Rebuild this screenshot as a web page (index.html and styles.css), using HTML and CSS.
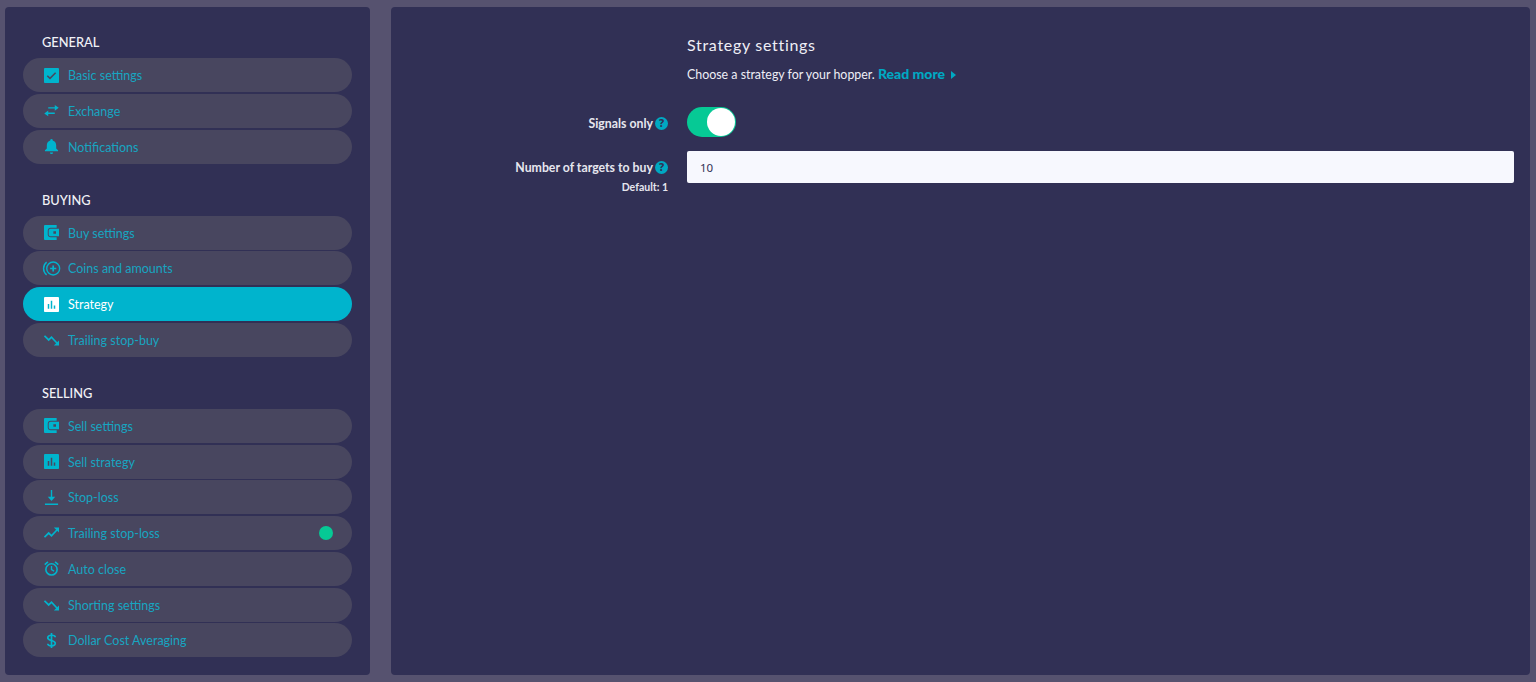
FILE: index.html
```html
<!DOCTYPE html>
<html lang="en">
<head>
<meta charset="utf-8">
<title>Strategy settings</title>
<link rel="stylesheet" href="styles.css">
</head>
<body>
<svg class="defs" width="0" height="0" aria-hidden="true">
  <symbol id="i-check" viewBox="0 0 16 16"><path fill="currentColor" fill-rule="evenodd" d="M1.200 0h13.600C15.500 0 16 .500 16 1.200v13.600c0 .700-.500 1.200-1.200 1.200H1.200C.500 16 0 15.500 0 14.800V1.200C0 .500.500 0 1.200 0zM6.400 12.300l6.600-6.600-1.200-1.200-5.400 5.400-2.300-2.300-1.200 1.200z"/></symbol>
  <symbol id="i-swap" viewBox="0 0 16 16"><path fill="currentColor" d="M4.500 4.400h7V2l4.200 3.100-4.200 3.100V5.800h-7zM11.500 10.200h-7V8L.3 11.100l4.200 3.100v-2.400h7z"/></symbol>
  <symbol id="i-bell" viewBox="0 0 16 16"><path fill="currentColor" d="M8 0a1.300 1.300 0 0 1 1.300 1.300v.4c2.400.6 3.700 2.700 3.700 5.100v3.400l2 1.700v1.100H1v-1.100l2-1.700V6.800c0-2.400 1.300-4.500 3.700-5.100v-.4A1.300 1.300 0 0 1 8 0zM6.300 14.400h3.400a1.700 1.600 0 0 1-3.400 0z"/></symbol>
  <symbol id="i-wallet" viewBox="0 0 16 16"><path fill="currentColor" fill-rule="evenodd" d="M1 0h12.500v3H7C5.300 3 4 4.300 4 6v4c0 1.700 1.300 3 3 3h6.500v3H1c-.600 0-1-.400-1-1V1c0-.600.400-1 1-1zM7 4h9v8H7c-1.100 0-2-.900-2-2V6c0-1.100.900-2 2-2zM10 6.600v2.800h2.800V6.600z"/></symbol>
  <symbol id="i-coins" viewBox="0 0 20 16"><g fill="none" stroke="currentColor" stroke-width="1.500"><circle cx="11.800" cy="8" r="6.900"/><path d="M4.800 1.200a8.700 8.700 0 0 0 0 13.600"/><path stroke-width="1.800" d="M8.500 8h6.600M11.800 4.700v6.600"/></g></symbol>
  <symbol id="i-chart" viewBox="0 0 16 16"><path fill="currentColor" fill-rule="evenodd" d="M1.200 0h13.600c.700 0 1.200.500 1.200 1.200v13.600c0 .700-.500 1.200-1.200 1.200H1.200C.500 16 0 15.500 0 14.800V1.200C0 .500.500 0 1.200 0zM4 7.500v5h1.600v-5zM7.200 4v8.500h1.600V4zM10.400 9v3.500H12V9z"/></symbol>
  <symbol id="i-down" viewBox="0 0 16 14"><path fill="none" stroke="currentColor" stroke-width="1.800" d="M.5 3l4.500 4.500 3-3L14 11"/><path fill="currentColor" d="M16.500 13.500H10.500L16.500 7.500z"/></symbol>
  <symbol id="i-up" viewBox="0 0 16 14"><path fill="none" stroke="currentColor" stroke-width="1.800" d="M.5 11l4.500-4.500 3 3L14 3"/><path fill="currentColor" d="M16.500.5H10.500L16.500 6.500z"/></symbol>
  <symbol id="i-stop" viewBox="0 0 14 16"><path fill="none" stroke="currentColor" stroke-width="1.500" d="M0 15.200h14M7 0v9"/><path fill="currentColor" d="M3 7.300h8L7 11.800z"/></symbol>
  <symbol id="i-alarm" viewBox="0 0 16 16"><g fill="none" stroke="currentColor"><circle cx="8" cy="9" r="6" stroke-width="1.700"/><path stroke-width="1.400" d="M8 5.200V9.200l2.800 1.600"/><path stroke-width="1.800" d="M.8 3.800 4.200 1M15.200 3.800 11.800 1"/></g></symbol>
  <symbol id="i-dollar" viewBox="0 0 10 16"><g fill="none" stroke="currentColor" stroke-width="1.800"><path d="M9 4.500C9 3 7.300 2.400 5 2.400S1 3.300 1 5s1.800 2.400 4 3 4 1.200 4 3-1.800 2.700-4 2.700-4-.8-4-2.200"/><path d="M5 0v16"/></g></symbol>
</svg>
<div class="page">
  <aside class="sidebar">
    <section class="group">
      <h2 class="group-title">GENERAL</h2>
      <a class="item"><svg class="ico"><use href="#i-check"/></svg><span>Basic settings</span></a>
      <a class="item"><svg class="ico"><use href="#i-swap"/></svg><span>Exchange</span></a>
      <a class="item"><svg class="ico"><use href="#i-bell"/></svg><span>Notifications</span></a>
    </section>
    <section class="group">
      <h2 class="group-title">BUYING</h2>
      <a class="item"><svg class="ico"><use href="#i-wallet"/></svg><span>Buy settings</span></a>
      <a class="item"><svg class="ico ico-wide"><use href="#i-coins"/></svg><span>Coins and amounts</span></a>
      <a class="item active"><svg class="ico"><use href="#i-chart"/></svg><span>Strategy</span></a>
      <a class="item"><svg class="ico"><use href="#i-down"/></svg><span>Trailing stop-buy</span></a>
    </section>
    <section class="group">
      <h2 class="group-title">SELLING</h2>
      <a class="item"><svg class="ico"><use href="#i-wallet"/></svg><span>Sell settings</span></a>
      <a class="item"><svg class="ico"><use href="#i-chart"/></svg><span>Sell strategy</span></a>
      <a class="item"><svg class="ico"><use href="#i-stop"/></svg><span>Stop-loss</span></a>
      <a class="item"><svg class="ico"><use href="#i-up"/></svg><span>Trailing stop-loss</span><i class="dot"></i></a>
      <a class="item"><svg class="ico"><use href="#i-alarm"/></svg><span>Auto close</span></a>
      <a class="item"><svg class="ico"><use href="#i-down"/></svg><span>Shorting settings</span></a>
      <a class="item"><svg class="ico"><use href="#i-dollar"/></svg><span>Dollar Cost Averaging</span></a>
    </section>
  </aside>
  <main class="content">
    <div class="form">
      <div class="row row-head">
        <div class="label-col"></div>
        <div class="field-col">
          <h1 class="title">Strategy settings</h1>
          <p class="intro">Choose a strategy for your hopper. <a class="more">Read more<svg class="caret" viewBox="0 0 5 8"><path d="M0 0l5 4-5 4z" fill="currentColor"/></svg></a></p>
        </div>
      </div>
      <div class="row row-toggle">
        <div class="label-col"><label class="label">Signals only<span class="help">?</span></label></div>
        <div class="field-col"><span class="toggle"><i class="knob"></i></span></div>
      </div>
      <div class="row row-input">
        <div class="label-col">
          <label class="label">Number of targets to buy<span class="help">?</span></label>
          <small class="hint">Default: 1</small>
        </div>
        <div class="field-col"><input class="input" type="text" value="10"></div>
      </div>
    </div>
  </main>
</div>
</body>
</html>
```

FILE: styles.css
```css
* { box-sizing: border-box; }
html, body { height: 100%; }
body {
  margin: 0;
  background: #56526f;
  font-family: Lato, "Noto Sans", sans-serif;
  overflow: hidden;
}
.defs { position: absolute; }
.page {
  display: flex;
  gap: 21px;
  height: 682px;
  padding: 7px 6px 7px 5px;
}
.sidebar {
  flex: 0 0 365px;
  background: #313055;
  border-radius: 4px;
  padding: 25px 18px 0;
}
.group { margin-bottom: 26px; }
.group-title {
  margin: 0 0 6px 19px;
  height: 20px;
  font: 500 12.800px/20px Lato, sans-serif;
  color: #f2f2f7;
}
.item {
  display: flex;
  align-items: center;
  height: 34px;
  margin-bottom: 1.750px;
  padding: 0 19px 0 21px;
  border-radius: 17px;
  background: #48465f;
  color: #17a5c1;
  font-size: 12.500px;
  line-height: 30px;
}
.item span { margin: 2px 0 0 9px; }
.ico {
  flex: none;
  width: 15px;
  height: 15px;
  color: #00b4cd;
}
.ico-wide { width: 19px; margin-left: -2px; margin-right: -2px; }
.active { background: #00b4cd; color: #fff; }
.active .ico { color: #fff; }
.dot {
  margin-left: auto;
  width: 14px;
  height: 14px;
  border-radius: 50%;
  background: #06c995;
}
.content {
  flex: 1;
  background: #313055;
  border-radius: 4px;
  padding: 0 16px 0 0;
}
.form { display: flex; flex-direction: column; }
.row { display: flex; }
.label-col {
  flex: 0 0 277px;
  text-align: right;
}
.field-col { flex: 1; margin-left: 19px; }
.row-head { padding-top: 28px; height: 100px; }
.title {
  margin: 0;
  font: 400 16px/20px Lato, sans-serif;
  letter-spacing: .7px;
  color: #eeeef5;
}
.intro {
  margin: 10px 0 0;
  font-size: 12.400px;
  line-height: 18px;
  color: #eeeef5;
}
.more {
  font: 900 14px/18px Lato, sans-serif;
  color: #00a8c2;
}
.caret { width: 5px; height: 8px; margin-left: 6px; color: #00a8c2; }
.row-toggle { height: 44px; }
.row-toggle .label-col { padding-top: 5px; }
.label {
  display: inline-flex;
  align-items: center;
  justify-content: flex-end;
  font-size: 12.300px;
  font-weight: 700;
  line-height: 20px;
  color: #e6e6ee;
}
.help {
  display: inline-block;
  width: 13px;
  height: 13px;
  margin: -2px 0 0 2px;
  border-radius: 50%;
  background: #00a8c2;
  color: #313055;
  font: 800 10.500px/13px "Noto Sans", sans-serif;
  text-align: center;
}
.toggle {
  display: block;
  position: relative;
  width: 49px;
  height: 30px;
  border-radius: 15px;
  background: #06c995;
}
.knob {
  position: absolute;
  right: 1px;
  top: 1px;
  width: 28px;
  height: 28px;
  border-radius: 50%;
  background: #fff;
}
.row-input { height: 48px; }
.row-input .label-col { padding-top: 5px; }
.hint {
  display: block;
  margin-top: 3px;
  font-size: 10.500px;
  font-weight: 700;
  line-height: 12px;
  color: #e6e6ee;
}
.input {
  display: block;
  width: 100%;
  height: 32px;
  padding: 0 13px;
  border: 0;
  border-radius: 2px;
  background: #f7f8fe;
  color: #313055;
  font: 11.500px "Noto Sans", sans-serif;
}
```
